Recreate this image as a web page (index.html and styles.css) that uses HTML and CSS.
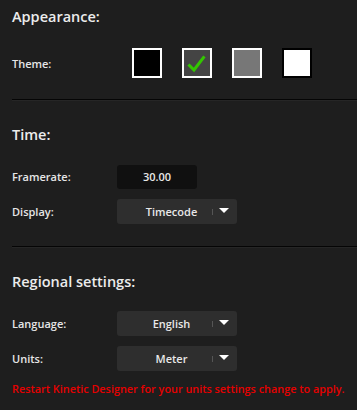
FILE: index.html
```html
<!DOCTYPE html>
<html>
<head>
<meta charset="utf-8">
<link rel="stylesheet" href="styles.css">
</head>
<body>
<div class="panel">
  <section class="section first">
    <h2 class="title">Appearance:</h2>
    <div class="row theme-row">
      <span class="label">Theme:</span>
      <div class="swatches">
        <span class="swatch black"></span>
        <span class="swatch dark selected">
          <svg width="26" height="26" viewBox="0 0 26 26"><path d="M5.5 15.5 L10 20 L19.5 7.5" fill="none" stroke="#33c600" stroke-width="3" stroke-linecap="square"/></svg>
        </span>
        <span class="swatch gray"></span>
        <span class="swatch white"></span>
      </div>
    </div>
  </section>
  <hr class="sep">
  <section class="section">
    <h2 class="title">Time:</h2>
    <div class="row">
      <span class="label">Framerate:</span>
      <div class="input">30.00</div>
    </div>
    <div class="row">
      <span class="label">Display:</span>
      <div class="select"><span class="value">Timecode</span><span class="tick"></span><span class="arrow"></span></div>
    </div>
  </section>
  <hr class="sep">
  <section class="section">
    <h2 class="title">Regional settings:</h2>
    <div class="row">
      <span class="label">Language:</span>
      <div class="select"><span class="value">English</span><span class="tick"></span><span class="arrow"></span></div>
    </div>
    <div class="row">
      <span class="label">Units:</span>
      <div class="select"><span class="value">Meter</span><span class="tick"></span><span class="arrow"></span></div>
    </div>
    <p class="warning">Restart Kinetic Designer for your units settings change to apply.</p>
  </section>
</div>
</body>
</html>
```
FILE: styles.css
```css
html, body {
  margin: 0;
  padding: 0;
  background: #1e1e1e;
  height: 100%;
}
body {
  font-family: "Open Sans", "Noto Sans", sans-serif;
  color: #e8e8e8;
  overflow: hidden;
}
.panel {
  padding-left: 12px;
}
.section {
  padding-right: 12px;
}
.title {
  margin: 0;
  font-size: 14.5px;
  font-weight: 600;
  line-height: 20px;
  height: 20px;
  color: #ececec;
}
.section .title {
  margin-top: 24px;
  margin-bottom: 19px;
}
.first .title {
  margin-top: 7px;
  margin-bottom: 21px;
}
.row {
  display: flex;
  align-items: center;
  height: 25px;
  margin-bottom: 10px;
}
.theme-row {
  height: 30px;
  margin-bottom: 21px;
}
.label {
  width: 105px;
  font-size: 11px;
  font-weight: 600;
  color: #e6e6e6;
}
.swatches {
  display: flex;
  gap: 20px;
  padding-left: 15px;
}
.swatch {
  box-sizing: border-box;
  width: 30px;
  height: 30px;
  border: 2px solid #ffffff;
  display: flex;
  align-items: center;
  justify-content: center;
}
.black { background: #000; }
.dark { background: #444444; }
.gray { background: #777777; }
.white { background: #fff; border-color: #000; }
.input {
  width: 80px;
  height: 24px;
  border-radius: 3px;
  background: #101010;
  font-size: 11px;
  font-weight: 600;
  display: flex;
  align-items: center;
  justify-content: center;
}
.select {
  width: 120px;
  height: 25px;
  border-radius: 3px;
  background: #2e2e2e;
  display: flex;
  align-items: center;
  font-size: 11px;
  font-weight: 600;
}
.select .value {
  flex: 1;
  text-align: center;
  padding-left: 14px;
}
.select .tick {
  width: 1px;
  height: 6px;
  background: #555;
  margin-right: 6px;
}
.select .arrow {
  width: 0;
  height: 0;
  border-left: 5px solid transparent;
  border-right: 5px solid transparent;
  border-top: 5px solid #fff;
  margin-right: 8px;
  margin-top: -2px;
}
.sep {
  margin: 0;
  border: 0;
  height: 1px;
  background: #050505;
  border-bottom: 1px solid #262626;
}
.section:nth-of-type(2) .row:last-child {
  margin-bottom: 22px;
}
.warning {
  margin: 0;
  font-size: 10.85px;
  font-weight: 600;
  color: #e60000;
  line-height: 16px;
  white-space: nowrap;
}
```
